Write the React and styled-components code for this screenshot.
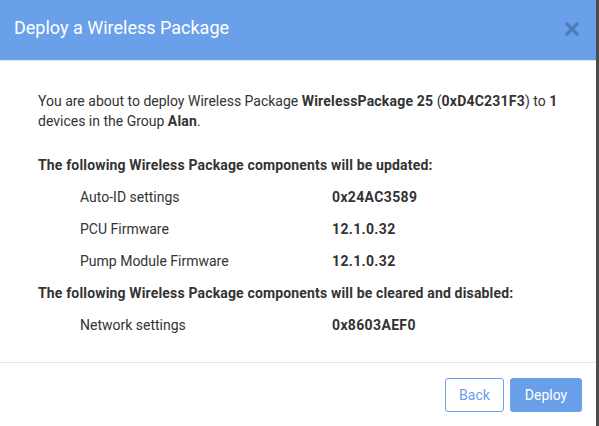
import styled, { createGlobalStyle } from "styled-components";

const GlobalStyle = createGlobalStyle`
  html, body {
    margin: 0;
    padding: 0;
    background: #4b4b4b;
    font-family: Roboto, "Liberation Sans", Arial, sans-serif;
  }
`;

const updated = [
  { name: "Auto-ID settings", value: "0x24AC3589" },
  { name: "PCU Firmware", value: "12.1.0.32" },
  { name: "Pump Module Firmware", value: "12.1.0.32" },
];

const cleared = [{ name: "Network settings", value: "0x8603AEF0" }];

const App = () => {
  return (
    <>
      <GlobalStyle />
      <Dialog>
        <Header>
          <Title>Deploy a Wireless Package</Title>
          <CloseButton aria-label="Close">
            <svg width="16" height="16" viewBox="0 0 16 16">
              <path
                d="M2 2 L14 14 M14 2 L2 14"
                stroke="currentColor"
                strokeWidth="3.2"
                strokeLinecap="butt"
              />
            </svg>
          </CloseButton>
        </Header>
        <Body>
          <Intro>
            You are about to deploy Wireless Package{" "}
            <b>WirelessPackage 25</b> (<b>0xD4C231F3</b>) to <b>1</b> devices
            in the Group <b>Alan</b>.
          </Intro>
          <SectionTitle>
            The following Wireless Package components will be updated:
          </SectionTitle>
          <List>
            {updated.map((item) => (
              <Row key={item.name}>
                <Label>{item.name}</Label>
                <Value>{item.value}</Value>
              </Row>
            ))}
          </List>
          <SectionTitle>
            The following Wireless Package components will be cleared and
            disabled:
          </SectionTitle>
          <List>
            {cleared.map((item) => (
              <Row key={item.name}>
                <Label>{item.name}</Label>
                <Value>{item.value}</Value>
              </Row>
            ))}
          </List>
        </Body>
        <Footer>
          <Button width={59}>Back</Button>
          <Button primary width={72}>
            Deploy
          </Button>
        </Footer>
      </Dialog>
    </>
  );
};

export default App;

const Dialog = styled.div`
  width: 596px;
  min-height: 426px;
  background: #fff;
  display: flex;
  flex-direction: column;
`;

const Header = styled.div`
  height: 60px;
  background: #6aa0e9;
  border-bottom: 1px solid #e3e3e3;
  display: flex;
  align-items: center;
  justify-content: space-between;
  padding: 0 16px 0 14px;
`;

const Title = styled.h4`
  margin: 0;
  font-size: 18px;
  font-weight: 400;
  color: #fff;
  line-height: 20px;
  padding-bottom: 4px;
`;

const CloseButton = styled.button`
  border: 0;
  background: none;
  padding: 0;
  margin-bottom: 2px;
  color: #4f7db9;
  display: flex;
  cursor: pointer;
`;

const Body = styled.div`
  padding: 30px 33px 0 38px;
  color: #333;
  font-size: 14px;
  line-height: 20px;
  height: 271px;
  border-bottom: 1px solid #e5e5e5;
  b {
    font-weight: 700;
    letter-spacing: 0.2px;
  }
`;

const Intro = styled.p`
  margin: 0 0 24px;
`;

const SectionTitle = styled.div`
  font-weight: 700;
  letter-spacing: 0.16px;
`;

const List = styled.div`
  display: flex;
  flex-direction: column;
  padding: 6px 0 6px 42px;
`;

const Row = styled.div`
  display: grid;
  grid-template-columns: 252px 1fr;
  height: 32px;
  align-items: center;
`;

const Label = styled.span``;

const Value = styled.span`
  font-weight: 700;
  letter-spacing: 0.35px;
`;

const Footer = styled.div`
  display: flex;
  justify-content: flex-end;
  gap: 6px;
  padding: 15px 14px 0;
`;

const Button = styled.button`
  width: ${(p) => p.width}px;
  height: 34px;
  padding: 0;
  border-radius: 3px;
  font-family: Roboto, "Liberation Sans", Arial, sans-serif;
  font-size: 14px;
  border: 1px solid #6aa0e9;
  background: ${(p) => (p.primary ? "#6aa0e9" : "#fff")};
  color: ${(p) => (p.primary ? "#fff" : "#6aa0e9")};
  cursor: pointer;
`;
